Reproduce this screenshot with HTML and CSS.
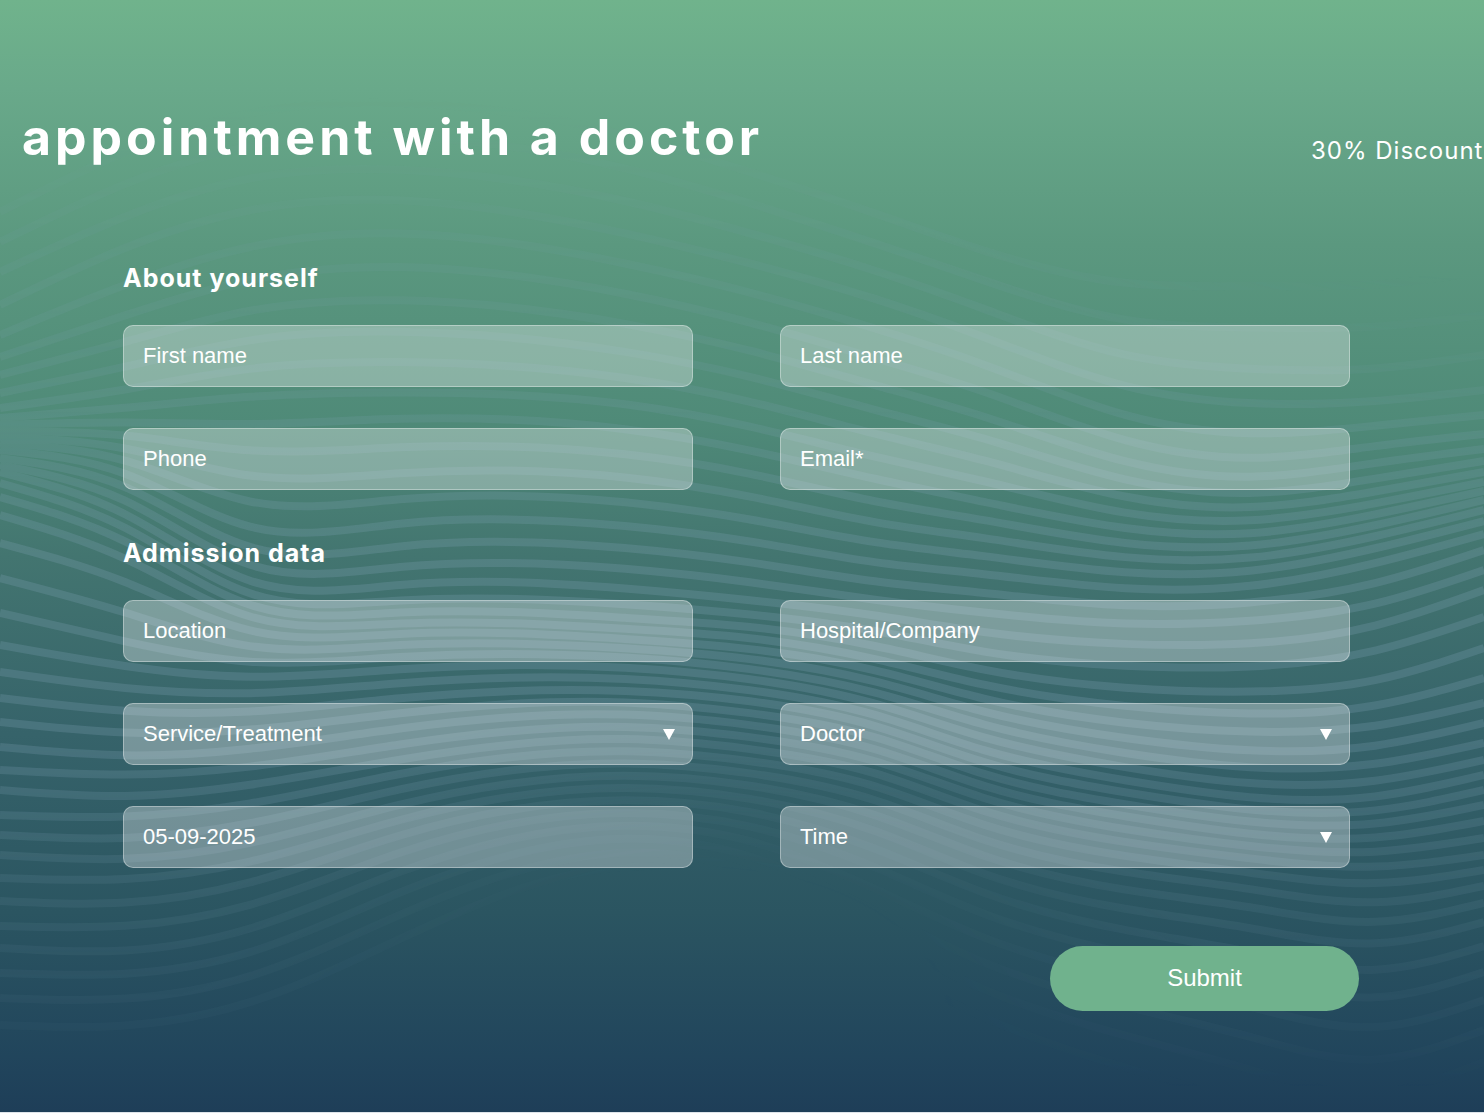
FILE: index.html
```html
<!DOCTYPE html>
<html lang="en">
<head>
<meta charset="utf-8">
<meta name="viewport" content="width=device-width, initial-scale=1">
<title>Appointment with a doctor</title>
<link rel="stylesheet" href="styles.css">
</head>
<body>
<main class="page">
  <svg class="waves" viewBox="0 0 1484 1112" preserveAspectRatio="none" aria-hidden="true">
    <defs>
      <linearGradient id="fade" x1="0" y1="0" x2="0" y2="1">
        <stop offset="0.08" stop-color="#000"/>
        <stop offset="0.2" stop-color="#444"/>
        <stop offset="0.36" stop-color="#999"/>
        <stop offset="0.5" stop-color="#fff"/>
        <stop offset="0.66" stop-color="#fff"/>
        <stop offset="0.8" stop-color="#777"/>
        <stop offset="0.98" stop-color="#000"/>
      </linearGradient>
      <radialGradient id="hollow" gradientUnits="userSpaceOnUse" cx="0" cy="0" r="1" gradientTransform="translate(700 1010) scale(520 310)">
        <stop offset="0.45" stop-color="#000" stop-opacity="1"/>
        <stop offset="1" stop-color="#000" stop-opacity="0"/>
      </radialGradient>
      <radialGradient id="corner" gradientUnits="userSpaceOnUse" cx="0" cy="0" r="1" gradientTransform="translate(1484 110) scale(620 330)">
        <stop offset="0.5" stop-color="#000" stop-opacity="1"/>
        <stop offset="1" stop-color="#000" stop-opacity="0"/>
      </radialGradient>
      <mask id="wave-mask" maskUnits="userSpaceOnUse" x="0" y="0" width="1484" height="1112">
        <rect width="1484" height="1112" fill="url(#fade)"/>
        <rect width="1484" height="1112" fill="url(#hollow)"/>
        <rect width="1484" height="1112" fill="url(#corner)"/>
      </mask>
    </defs>
    <g mask="url(#wave-mask)"><g class="wave-lines" id="wave-lines"></g></g>
  </svg>

  <header class="banner">
    <h1 class="banner-title">appointment with a doctor</h1>
    <p class="banner-offer">30% Discount</p>
  </header>

  <form class="form" action="#">
    <h2 class="form-heading">About yourself</h2>
    <div class="grid">
      <div class="field"><input class="control" id="first-name" type="text" placeholder=" "><label class="field-label" for="first-name">First name</label></div>
      <div class="field"><input class="control" id="last-name" type="text" placeholder=" "><label class="field-label" for="last-name">Last name</label></div>
      <div class="field"><input class="control" id="phone" type="tel" placeholder=" "><label class="field-label" for="phone">Phone</label></div>
      <div class="field"><input class="control" id="email" type="email" placeholder=" "><label class="field-label" for="email">Email*</label></div>
    </div>
    <h2 class="form-heading">Admission data</h2>
    <div class="grid">
      <div class="field"><input class="control" id="location" type="text" placeholder=" "><label class="field-label" for="location">Location</label></div>
      <div class="field"><input class="control" id="hospital" type="text" placeholder=" "><label class="field-label" for="hospital">Hospital/Company</label></div>
      <div class="field"><select class="control" id="service"><option value=""></option></select><label class="field-label" for="service">Service/Treatment</label><span class="arrow"></span></div>
      <div class="field"><select class="control" id="doctor"><option value=""></option></select><label class="field-label" for="doctor">Doctor</label><span class="arrow"></span></div>
      <div class="field"><input class="control" id="date" type="text" value="05-09-2025" aria-label="Date"></div>
      <div class="field"><select class="control" id="time"><option value=""></option></select><label class="field-label" for="time">Time</label><span class="arrow"></span></div>
    </div>
    <div class="actions"><button class="submit" type="submit">Submit</button></div>
  </form>
</main>
<script src="waves.js"></script>
</body>
</html>
```
FILE: styles.css
```css
* { box-sizing: border-box; }

body {
  margin: 0;
  background: #dfe5ea;
  font-family: "Liberation Sans", Arial, sans-serif;
  color: #fff;
}

.page {
  position: relative;
  overflow: hidden;
  min-height: calc(100vh - 1px);
  background: linear-gradient(#70b38c 0%, #69a98a 8%, #5b987f 22%, #4f8a78 38%, #437570 50%, #36636a 66%, #2b5561 82%, #21455c 95%, #1e3e58 100%);
}

.waves {
  position: absolute;
  inset: 0;
  width: 100%;
  height: 100%;
}

.wave-lines {
  fill: none;
  stroke: #86a6bb;
  stroke-width: 8;
  opacity: 0.24;
}

.banner,
.form { position: relative; }

.banner {
  display: flex;
  justify-content: space-between;
  align-items: flex-end;
  padding: 107px 0 0 22px;
  font-family: Inter, "Open Sans", sans-serif;
  white-space: nowrap;
}

.banner-title {
  margin: 0;
  font-size: 50px;
  line-height: 60px;
  font-weight: 700;
  letter-spacing: 4px;
}

.banner-offer {
  flex: none;
  width: 173px;
  margin: 0;
  font-size: 24px;
  line-height: 32px;
  font-weight: 400;
  letter-spacing: 1px;
}

.form {
  padding: 95px 134px 101px 123px;
}

.form-heading {
  margin: 0;
  padding-bottom: 31px;
  font-family: Inter, "Open Sans", sans-serif;
  font-size: 25px;
  line-height: 32px;
  font-weight: 700;
  letter-spacing: 1px;
}

.grid {
  display: grid;
  grid-template-columns: 1fr 1fr;
  gap: 41px 87px;
}

.grid + .form-heading { margin-top: 47px; }

.field {
  display: grid;
  align-items: center;
}

.field > * { grid-area: 1 / 1; }

.control {
  width: 100%;
  height: 62px;
  margin: 0;
  padding: 0 19px;
  border: 1px solid rgba(255, 255, 255, 0.35);
  border-radius: 10px;
  background: rgba(255, 255, 255, 0.32);
  color: #fff;
  font: 22px "Liberation Sans", Arial, sans-serif;
  appearance: none;
  outline: none;
}

.field-label {
  justify-self: start;
  padding-left: 20px;
  font-size: 22px;
  line-height: 26px;
  pointer-events: none;
}

input:not(:placeholder-shown) + .field-label { visibility: hidden; }

.arrow {
  justify-self: end;
  margin-right: 18px;
  border: 6px solid transparent;
  border-top: 11px solid #fff;
  border-bottom: 0;
  pointer-events: none;
}

.actions {
  display: flex;
  justify-content: flex-end;
  margin: 78px -9px 0 0;
}

.submit {
  width: 309px;
  height: 65px;
  padding: 0 0 2px;
  border: 0;
  border-radius: 33px;
  background: #70b28d;
  color: #fff;
  font: 24px "Liberation Sans", Arial, sans-serif;
}
```
FILE: waves.js
```js
// Each column holds the heights at which the family of lines crosses one x station.
const stations = [0, 125, 250, 400, 625, 750, 875, 984, 1125, 1250, 1375, 1484];
const columns = [
  [212, 242, 272, 305, 335, 357, 375, 393, 408, 418, 425, 431, 437, 443, 450, 458, 465, 472, 483, 497, 515, 543, 578, 613, 645, 672, 698, 722, 747, 770, 790, 815, 835, 855, 878, 901, 926, 948, 973, 998, 1025],
  [150, 182, 215, 246, 284, 315, 342, 367, 390, 408, 422, 434, 446, 457, 469, 482, 496, 510, 524, 538, 556, 580, 612, 642, 667, 689, 712, 734, 757, 776, 798, 818, 840, 861, 881, 905, 928, 953, 976, 1001, 1028],
  [110, 143, 175, 207, 244, 277, 308, 338, 367, 396, 425, 453, 480, 508, 535, 556, 574, 590, 602, 613, 624, 637, 651, 665, 679, 695, 713, 731, 750, 768, 786, 805, 825, 845, 864, 885, 908, 932, 956, 980, 1006],
  [99, 133, 166, 196, 229, 263, 297, 329, 360, 391, 417, 446, 472, 498, 522, 545, 566, 584, 600, 612, 623, 633, 644, 656, 668, 682, 697, 712, 727, 743, 758, 772, 787, 802, 817, 832, 849, 868, 889, 912, 937],
  [132, 166, 199, 232, 262, 292, 322, 350, 376, 402, 427, 452, 475, 500, 524, 546, 567, 587, 603, 617, 628, 638, 647, 656, 666, 677, 689, 700, 712, 724, 736, 748, 760, 772, 784, 796, 808, 820, 832, 845, 858],
  [172, 203, 233, 263, 292, 322, 350, 376, 401, 426, 450, 473, 496, 519, 541, 562, 582, 600, 614, 626, 637, 648, 658, 668, 678, 689, 700, 712, 724, 736, 748, 760, 772, 784, 797, 810, 824, 838, 853, 868, 884],
  [213, 243, 270, 298, 328, 358, 385, 410, 434, 457, 479, 502, 523, 543, 563, 582, 600, 615, 630, 645, 658, 669, 680, 691, 702, 713, 724, 735, 747, 759, 771, 784, 798, 813, 829, 847, 866, 888, 910, 935, 960],
  [252, 281, 309, 337, 364, 391, 416, 438, 460, 481, 502, 520, 538, 556, 574, 593, 613, 633, 653, 671, 686, 700, 713, 726, 739, 752, 764, 776, 788, 800, 813, 827, 842, 858, 876, 895, 916, 940, 965, 992, 1020],
  [286, 323, 358, 389, 418, 443, 464, 482, 499, 515, 530, 545, 559, 574, 590, 607, 625, 645, 667, 689, 707, 724, 739, 754, 768, 781, 793, 805, 817, 830, 843, 857, 873, 891, 910, 931, 954, 980, 1007, 1036, 1068],
  [286, 328, 370, 405, 436, 461, 480, 496, 510, 523, 536, 548, 560, 573, 588, 604, 622, 645, 668, 693, 715, 733, 752, 769, 785, 799, 811, 823, 835, 847, 859, 873, 889, 907, 928, 952, 978, 1007, 1037, 1070, 1105],
  [286, 328, 370, 402, 426, 446, 463, 479, 492, 504, 515, 526, 537, 549, 564, 585, 606, 628, 653, 683, 708, 728, 748, 766, 783, 799, 813, 826, 840, 854, 869, 886, 906, 926, 948, 975, 1003, 1033, 1066, 1099, 1133],
  [272, 315, 355, 390, 415, 434, 449, 461, 472, 482, 491, 500, 510, 521, 534, 550, 570, 590, 617, 648, 678, 703, 723, 743, 760, 775, 790, 805, 821, 838, 855, 870, 886, 903, 922, 946, 972, 1000, 1030, 1062, 1096]
];

// Slopes of the natural cubic spline through ys at the stations.
function splineSlopes(ys) {
  const n = ys.length;
  const h = i => stations[i + 1] - stations[i];
  const c = [];
  const r = [];
  for (let i = 0; i < n; i++) {
    const left = i > 0 ? 1 / h(i - 1) : 0;
    const right = i < n - 1 ? 1 / h(i) : 0;
    let rhs = 0;
    if (left) rhs += 3 * (ys[i] - ys[i - 1]) * left * left;
    if (right) rhs += 3 * (ys[i + 1] - ys[i]) * right * right;
    const pivot = 2 * (left + right) - (i > 0 ? left * c[i - 1] : 0);
    c[i] = right / pivot;
    r[i] = (rhs - (i > 0 ? left * r[i - 1] : 0)) / pivot;
  }
  for (let i = n - 2; i >= 0; i--) r[i] -= c[i] * r[i + 1];
  return r;
}

function linePath(row) {
  const raw = columns.map(column => column[row]);
  // A light average along the line evens out its curvature.
  const ys = raw.map((y, i) => {
    if (i === 0 || i === raw.length - 1) return y;
    const t = (stations[i] - stations[i - 1]) / (stations[i + 1] - stations[i - 1]);
    return 0.8 * y + 0.2 * (raw[i - 1] * (1 - t) + raw[i + 1] * t);
  });
  const slopes = splineSlopes(ys);
  let d = `M${stations[0]} ${ys[0]}`;
  for (let i = 0; i < ys.length - 1; i++) {
    const x0 = stations[i];
    const x1 = stations[i + 1];
    const h = (x1 - x0) / 3;
    d += ` C${x0 + h} ${ys[i] + h * slopes[i]} ${x1 - h} ${ys[i + 1] - h * slopes[i + 1]} ${x1} ${ys[i + 1]}`;
  }
  return d;
}

const group = document.getElementById("wave-lines");
columns[0].forEach((_, row) => {
  const path = document.createElementNS("http://www.w3.org/2000/svg", "path");
  path.setAttribute("d", linePath(row));
  group.appendChild(path);
});
```
